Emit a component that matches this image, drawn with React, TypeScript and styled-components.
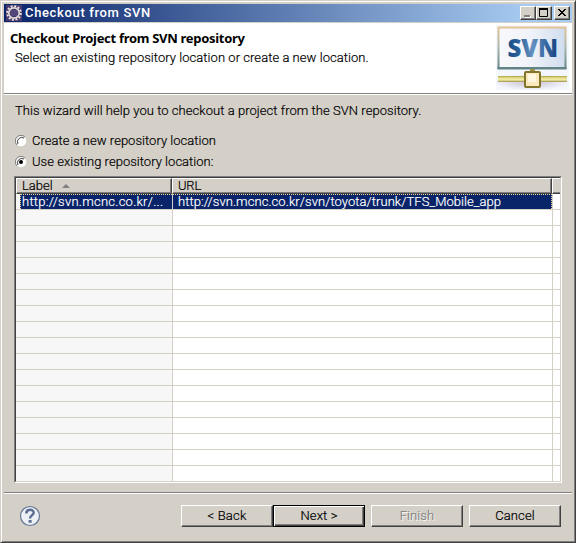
import React from "react";
import styled, { createGlobalStyle } from "styled-components";

const face = "#d4d0c8";
const navy = "#0a246a";

const Global = createGlobalStyle`
  * { box-sizing: border-box; }
  body { margin: 0; background: ${face}; font-family: Roboto, "Liberation Sans", sans-serif; font-size: 13px; font-weight: 300; color: #000; }
`;

const Dialog = styled.div`
  width: 576px; height: 543px; display: flex; flex-direction: column;
  background: ${face}; padding: 2px 2px 0;
  border: 1px solid; border-color: ${face} #404040 #404040 ${face};
  box-shadow: inset 1px 1px #fff, inset -1px -1px #808080;
`;
const Inner = styled.div`padding: 1px 1px 0; width: 570px;`;

const TitleBar = styled.header`
  height: 18px; display: flex; align-items: center; padding: 0 2px;
  background: linear-gradient(90deg, ${navy}, #a6caf0 92%);
`;
const Title = styled.h1<{ $ls: number }>`
  margin: 0; flex: 1; padding-left: 3px; font-size: 13px; line-height: 18px; font-weight: 500; color: #fff;
  letter-spacing: ${p => p.$ls}px; white-space: nowrap;
`;
const CaptionButton = styled.button<{ $gap?: boolean }>`
  width: 16px; height: 14px; padding: 0; margin-left: ${p => (p.$gap ? 2 : 0)}px; display: block;
  background: ${face}; border: 1px solid; border-color: #fff #404040 #404040 #fff;
  box-shadow: inset -1px -1px #808080;
  svg { display: block; }
`;

const Banner = styled.section`
  margin-top: 1px; height: 70px; background: #fff; display: flex; justify-content: space-between; padding: 1px 3px 0 6px;
`;
const BannerText = styled.div`padding-top: 4px;`;
const Heading = styled.h2<{ $ls: number }>`
  margin: 0; font: 700 13px/20px "Noto Sans", sans-serif; letter-spacing: ${p => p.$ls}px; white-space: nowrap;
`;
const Text = styled.span<{ $ls: number }>`
  display: block; line-height: 16px; letter-spacing: ${p => p.$ls}px; white-space: nowrap;
  -webkit-text-stroke: 0.2px currentColor;
`;
const Subtitle = styled(Text)`margin: 2px 0 0 5px;`;
const Rule = styled.hr`margin: 0; border: 0; height: 2px; background: #808080; border-bottom: 1px solid #fff;`;

const Body = styled.main`height: 397px; padding: 8px 10px 0;`;
const Intro = styled(Text)`padding-left: 1px; margin-bottom: 14px;`;
const Option = styled.label`display: flex; height: 16px; align-items: center; gap: 5px; margin: 0 0 5px 1px;`;

const Table = styled.div`
  width: 548px; height: 307px; margin-top: 6px; background: #fff;
  border: 1px solid; border-color: #808080 #fff #fff #808080;
`;
const TableInner = styled.div`
  height: 305px; border: 1px solid; border-color: #404040 ${face} ${face} #404040; overflow: hidden;
`;
const HeadRow = styled.div`display: grid; grid-template-columns: 156px 380px 8px;`;
const Row = styled.div`display: grid; grid-template-columns: 157px 380px 7px;`;
const HeadCell = styled.div<{ $last?: boolean }>`
  height: 16px; background: ${face}; padding-left: 5px; display: flex; align-items: center; gap: 9px;
  border: solid; border-width: 1px ${p => (p.$last ? 0 : 1)}px 1px 1px; border-color: #fff #404040 #404040 #fff;
  box-shadow: inset ${p => (p.$last ? 0 : -1)}px -1px #808080;
`;
const Cell = styled.div<{ $sorted?: boolean; $last?: boolean }>`
  height: 16px; background: ${p => (p.$sorted ? "#f7f7f7" : "#fff")};
  border-bottom: 1px solid ${face}; border-right: ${p => (p.$last ? 0 : 1)}px solid ${face};
`;
const SelectedCell = styled(Cell)<{ $first?: boolean }>`
  color: #fff; padding-left: ${p => (p.$first ? 4 : 0)}px;
`;
const Selection = styled.div<{ $first?: boolean }>`
  height: 15px; background: ${navy}; padding-left: ${p => (p.$first ? 1 : 5)}px; overflow: hidden;
  border-top: 1px dotted #f5db95;
  border-left: ${p => (p.$first ? "1px dotted #f5db95" : "0")};
  border-right: ${p => (p.$first ? "0" : "1px dotted #f5db95")};
  ${Text} { line-height: 14px; }
`;

const Footer = styled.footer`height: 47px; display: flex; align-items: flex-start; padding: 11px 9px 0 15px;`;
const Help = styled.div`width: 162px; height: 24px;`;
const Button = styled.button<{ $primary?: boolean; $gap?: boolean; $ls: number }>`
  width: 92px; height: 22px; margin: 0 0 0 ${p => (p.$gap ? 6 : 0)}px; padding: 0 0 1px; font: inherit; letter-spacing: ${p => p.$ls}px;
  line-height: 16px; color: #000; background: ${face}; -webkit-text-stroke: 0.2px currentColor;
  border: 1px solid; border-color: ${p => (p.$primary ? "#000" : "#fff #404040 #404040 #fff")};
  box-shadow: ${p => (p.$primary ? "inset 1px 1px #fff, inset -1px -1px #404040, inset -2px -2px #808080" : "inset -1px -1px #808080")};
  &:disabled { color: #808080; text-shadow: 1px 1px #fff; }
`;

const EclipseIcon = () => (
  <svg width="16" height="16" viewBox="0 0 16 16">
    <rect width="16" height="16" fill="#4a3a70" />
    <circle cx="8" cy="8" r="6.8" fill="none" stroke="#e6e0da" strokeWidth="2" strokeDasharray="2 1.56" />
    <circle cx="8" cy="8" r="5.2" fill="#41366b" stroke="#ded9d4" strokeWidth="1.7" />
    <path d="M4.8 6h6.4M4.4 8h7.2M4.8 10h6.4" stroke="#6c6493" strokeWidth=".8" />
  </svg>
);

const SvnLogo = () => (
  <svg width="73" height="66" viewBox="0 0 73 66">
    <defs>
      <linearGradient id="screen"><stop stopColor="#f8f9fc" /><stop offset=".5" stopColor="#eff2f8" /><stop offset="1" stopColor="#cfdcee" /></linearGradient>
      <linearGradient id="frame" x2="0" y2="1"><stop stopColor="#e3c394" /><stop offset=".5" stopColor="#a8b5a9" /><stop offset="1" stopColor="#638485" /></linearGradient>
      <linearGradient id="letters" gradientUnits="userSpaceOnUse" x1="12" y1="0" x2="61" y2="0"><stop stopColor="#194e88" /><stop offset=".22" stopColor="#2b619a" /><stop offset=".5" stopColor="#6490bf" /><stop offset=".72" stopColor="#3f70a8" /><stop offset="1" stopColor="#17447f" /></linearGradient>
      <linearGradient id="pipe" x2="0" y2="1"><stop stopColor="#a79e4c" /><stop offset=".3" stopColor="#e7dd88" /><stop offset=".65" stopColor="#f2eda9" /><stop offset="1" stopColor="#989043" /></linearGradient>
      <radialGradient id="glow"><stop stopColor="#c8bfd2" /><stop offset="1" stopColor="#f3f5fd" /></radialGradient>
    </defs>
    <rect y="1" width="73" height="65" fill="#f5f7fe" />
    <ellipse cx="35" cy="58" rx="38" ry="8" fill="url(#glow)" />
    <rect x="2.5" y="3.5" width="67" height="41" fill="url(#screen)" stroke="url(#frame)" strokeWidth="2" />
    <rect x="1.5" y="43" width="69" height="2" fill="#638485" />
    <text x="11.5" y="32.5" fontFamily="Open Sans" fontWeight="800" fontSize="24" fill="url(#letters)">SVN</text>
    <rect x="34" y="45" width="5" height="3" fill="#9e9448" />
    <rect x="2" y="52" width="69" height="6" fill="url(#pipe)" />
    <rect x="29" y="48" width="15" height="15" rx="1" fill="#fbe9bd" stroke="#80752a" strokeWidth="2" />
    <rect x="32" y="50" width="8" height="8" fill="#fff6df" />
  </svg>
);

const Radio = ({ checked }: { checked?: boolean }) => (
  <svg width="12" height="12" viewBox="0 0 12 12">
    <circle cx="6" cy="6" r="5.3" fill="#fff" />
    <path d="M2 10A5.5 5.5 0 0 1 10 2" fill="none" stroke="#808080" />
    <path d="M3 9A4.4 4.4 0 0 1 9 3" fill="none" stroke="#404040" />
    {checked && <circle cx="6" cy="6" r="2" />}
  </svg>
);

const HelpIcon = () => (
  <svg width="22" height="22" viewBox="0 0 22 22">
    <circle cx="11" cy="11" r="9.5" fill="#edf0f5" stroke="#627594" strokeWidth="1.2" />
    <path d="M7.3 8.4C7.3 3.6 14.7 3.8 14.7 7.8C14.7 10.4 11 10.2 11 13.4" fill="none" stroke="#5b6d92" strokeWidth="2.4" />
    <rect x="9.6" y="15" width="3" height="2.8" fill="#5b6d92" />
  </svg>
);

const emptyRows = Array.from({ length: 17 }, (_, i) => i);

export default function App() {
  return (
    <>
      <Global />
      <Dialog>
        <Inner>
          <TitleBar>
            <EclipseIcon />
            <Title $ls={0.65}>Checkout from SVN</Title>
            <CaptionButton aria-label="Minimize"><svg width="14" height="12"><path d="M4 9h6v2H4z" fill="#fff" /><path d="M3 8h6v2H3z" fill="#808080" /></svg></CaptionButton>
            <CaptionButton aria-label="Maximize"><svg width="14" height="12"><path d="M2.5 1.5h8v8h-8z" fill="none" stroke="#000" /><path d="M2 1h9v2H2z" /></svg></CaptionButton>
            <CaptionButton $gap aria-label="Close"><svg width="14" height="12" shapeRendering="crispEdges"><path d="M3 2h2v1h1v1h2V3h1V2h2v1h-1v1H9v1H8v1h1v1h1v1h1v1H9V8H8V7H6v1H5v1H3V8h1V7h1V6h1V5H5V4H4V3H3z" /></svg></CaptionButton>
          </TitleBar>
          <Banner>
            <BannerText>
              <Heading $ls={-0.3}>Checkout Project from SVN repository</Heading>
              <Subtitle $ls={0.05}>Select an existing repository location or create a new location.</Subtitle>
            </BannerText>
            <SvnLogo />
          </Banner>
          <Rule />
          <Body>
            <Intro $ls={0.05}>This wizard will help you to checkout a project from the SVN repository.</Intro>
            <Option><Radio /><Text $ls={0.03}>Create a new repository location</Text></Option>
            <Option><Radio checked /><Text $ls={0.03}>Use existing repository location:</Text></Option>
            <Table>
              <TableInner>
                <HeadRow>
                  <HeadCell><Text $ls={0}>Label</Text><svg width="8" height="4"><path d="M0 4L4 0l4 4z" fill="#808080" /></svg></HeadCell>
                  <HeadCell><Text $ls={-0.2}>URL</Text></HeadCell>
                  <HeadCell $last />
                </HeadRow>
                <Row>
                  <SelectedCell $sorted $first><Selection $first><Text $ls={0.25}>http://svn.mcnc.co.kr/...</Text></Selection></SelectedCell>
                  <SelectedCell><Selection><Text $ls={0.06}>http://svn.mcnc.co.kr/svn/toyota/trunk/TFS_Mobile_app</Text></Selection></SelectedCell>
                  <Cell $last />
                </Row>
                {emptyRows.map(i => <Row key={i}><Cell $sorted /><Cell /><Cell $last /></Row>)}
              </TableInner>
            </Table>
          </Body>
          <Rule />
          <Footer>
            <Help><HelpIcon /></Help>
            <Button $ls={0.2}>&lt; Back</Button>
            <Button $primary $ls={0.1}>Next &gt;</Button>
            <Button $gap disabled $ls={0.1}>Finish</Button>
            <Button $gap $ls={0.1}>Cancel</Button>
          </Footer>
        </Inner>
      </Dialog>
    </>
  );
}
